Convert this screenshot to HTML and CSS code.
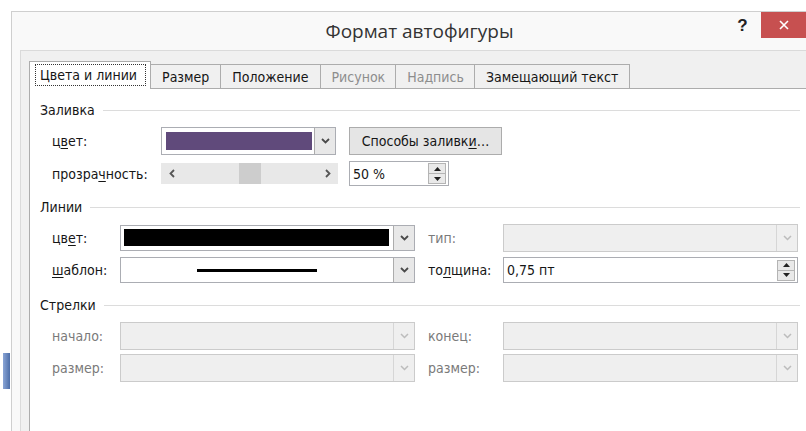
FILE: index.html
```html
<!DOCTYPE html>
<html lang="ru">
<head>
<meta charset="utf-8">
<title>Формат автофигуры</title>
<link rel="stylesheet" href="styles.css">
</head>
<body>
<div class="backdrop">
  <div class="sel-mark"></div>
</div>
<div class="window">
  <div class="titlebar">
    <div class="title">Формат автофигуры</div>
    <div class="help">?</div>
    <div class="close">
      <svg width="10" height="10" viewBox="0 0 10 10"><path d="M1 1 L9 9 M9 1 L1 9" stroke="#fff" stroke-width="1.6" fill="none"/></svg>
    </div>
  </div>
  <div class="frame">
    <div class="client">
      <div class="tabs">
        <div class="tab active"><span class="focus">Цвета и линии</span></div>
        <div class="tab">Размер</div>
        <div class="tab">Положение</div>
        <div class="tab disabled">Рисунок</div>
        <div class="tab disabled">Надпись</div>
        <div class="tab">Замещающий текст</div>
      </div>
      <div class="panel">
        <section class="group">
          <div class="group-head"><span>Заливка</span><i class="rule"></i></div>
          <div class="row row-first">
            <span class="lbl lbl-wide">ц<u>в</u>ет:</span>
            <div class="combo combo-fill">
              <div class="field"><div class="swatch swatch-purple"></div></div>
              <div class="drop"><svg width="9" height="6" viewBox="0 0 9 6"><path d="M1 1 L4.5 4.5 L8 1" stroke="#4a4a4a" stroke-width="1.8" fill="none"/></svg></div>
            </div>
            <div class="btn">Способы заливк<u>и</u>…</div>
          </div>
          <div class="row row-short">
            <span class="lbl lbl-wide">прозра<u>ч</u>ность:</span>
            <div class="scroll">
              <div class="sb-arrow"><svg width="6" height="9" viewBox="0 0 6 9"><path d="M5 1 L1.5 4.5 L5 8" stroke="#555" stroke-width="1.8" fill="none"/></svg></div>
              <div class="sb-track"><div class="sb-thumb"></div></div>
              <div class="sb-arrow"><svg width="6" height="9" viewBox="0 0 6 9"><path d="M1 1 L4.5 4.5 L1 8" stroke="#555" stroke-width="1.8" fill="none"/></svg></div>
            </div>
            <div class="spin spin-small">
              <span class="spin-text">50 %</span>
              <div class="spin-btns">
                <div class="spin-half spin-up"><svg width="7" height="4" viewBox="0 0 7 4"><path d="M0 4 L3.5 0 L7 4 Z" fill="#222"/></svg></div>
                <div class="spin-half"><svg width="7" height="4" viewBox="0 0 7 4"><path d="M0 0 L3.5 4 L7 0 Z" fill="#222"/></svg></div>
              </div>
            </div>
          </div>
        </section>

        <section class="group">
          <div class="group-head"><span>Линии</span><i class="rule"></i></div>
          <div class="row row-first">
            <span class="lbl">цв<u>е</u>т:</span>
            <div class="combo combo-wide combo-thin">
              <div class="field field-color"><div class="swatch swatch-black"></div></div>
              <div class="drop"><svg width="9" height="6" viewBox="0 0 9 6"><path d="M1 1 L4.5 4.5 L8 1" stroke="#4a4a4a" stroke-width="1.8" fill="none"/></svg></div>
            </div>
            <span class="lbl lbl2 off">тип:</span>
            <div class="combo combo-wide off">
              <div class="field"></div>
              <div class="drop"><svg width="9" height="6" viewBox="0 0 9 6"><path d="M1 1 L4.5 4.5 L8 1" stroke="#bcbcbc" stroke-width="1.5" fill="none"/></svg></div>
            </div>
          </div>
          <div class="row">
            <span class="lbl"><u>ш</u>аблон:</span>
            <div class="combo combo-wide combo-thin">
              <div class="field field-line"><div class="line-sample"></div></div>
              <div class="drop"><svg width="9" height="6" viewBox="0 0 9 6"><path d="M1 1 L4.5 4.5 L8 1" stroke="#4a4a4a" stroke-width="1.8" fill="none"/></svg></div>
            </div>
            <span class="lbl lbl2">то<u>л</u>щина:</span>
            <div class="spin spin-wide">
              <span class="spin-text">0,75 пт</span>
              <div class="spin-btns">
                <div class="spin-half spin-up"><svg width="7" height="4" viewBox="0 0 7 4"><path d="M0 4 L3.5 0 L7 4 Z" fill="#222"/></svg></div>
                <div class="spin-half"><svg width="7" height="4" viewBox="0 0 7 4"><path d="M0 0 L3.5 4 L7 0 Z" fill="#222"/></svg></div>
              </div>
            </div>
          </div>
        </section>

        <section class="group">
          <div class="group-head"><span>Стрелки</span><i class="rule"></i></div>
          <div class="row row-first">
            <span class="lbl off">начало:</span>
            <div class="combo combo-wide off">
              <div class="field"></div>
              <div class="drop"><svg width="9" height="6" viewBox="0 0 9 6"><path d="M1 1 L4.5 4.5 L8 1" stroke="#bcbcbc" stroke-width="1.5" fill="none"/></svg></div>
            </div>
            <span class="lbl lbl2 off">конец:</span>
            <div class="combo combo-wide off">
              <div class="field"></div>
              <div class="drop"><svg width="9" height="6" viewBox="0 0 9 6"><path d="M1 1 L4.5 4.5 L8 1" stroke="#bcbcbc" stroke-width="1.5" fill="none"/></svg></div>
            </div>
          </div>
          <div class="row">
            <span class="lbl off">размер:</span>
            <div class="combo combo-wide off">
              <div class="field"></div>
              <div class="drop"><svg width="9" height="6" viewBox="0 0 9 6"><path d="M1 1 L4.5 4.5 L8 1" stroke="#bcbcbc" stroke-width="1.5" fill="none"/></svg></div>
            </div>
            <span class="lbl lbl2 off">размер:</span>
            <div class="combo combo-wide off">
              <div class="field"></div>
              <div class="drop"><svg width="9" height="6" viewBox="0 0 9 6"><path d="M1 1 L4.5 4.5 L8 1" stroke="#bcbcbc" stroke-width="1.5" fill="none"/></svg></div>
            </div>
          </div>
        </section>
      </div>
    </div>
  </div>
</div>
</body>
</html>
```

FILE: styles.css
```css
* { box-sizing: border-box; }

html, body { margin: 0; }

body {
  width: 806px;
  height: 431px;
  overflow: hidden;
  background: #fff;
  display: flex;
  font-family: "DejaVu Sans", sans-serif;
  font-stretch: condensed;
  font-size: 14px;
  color: #161616;
}

u { text-decoration-thickness: 1px; text-underline-offset: 2px; }

/* strip of the document behind the dialog */
.backdrop { width: 11px; flex: none; padding-top: 353px; }
.sel-mark {
  width: 7px;
  height: 36px;
  margin-left: 3px;
  background: linear-gradient(90deg, #8aa5d6, #4d6ea8);
}

.window {
  flex: 1;
  min-width: 0;
  margin-top: 11px;
  border-left: 1px solid #cfcfcf;
  border-top: 1px solid #cfcfcf;
  background: #f9f9f9;
  display: flex;
  flex-direction: column;
}

/* title bar */
.titlebar { height: 38px; flex: none; display: flex; align-items: flex-start; }
.title {
  flex: 1;
  padding-left: 94px;
  text-align: center;
  font-family: "Open Sans", sans-serif;
  font-stretch: normal;
  font-size: 19px;
  line-height: 38px;
  color: #333;
}
.help {
  width: 28px;
  padding-right: 9px;
  text-align: center;
  font-family: "Liberation Sans", sans-serif;
  font-stretch: normal;
  font-weight: bold;
  font-size: 17px;
  line-height: 28px;
  color: #222;
}
.close {
  width: 45px;
  height: 26px;
  background: #c75050;
  display: flex;
  align-items: center;
  justify-content: center;
}

/* client area */
.frame { flex: 1; min-height: 0; padding-left: 8px; display: flex; }
.client {
  flex: 1;
  min-width: 0;
  border-top: 1px solid #dadada;
  border-left: 1px solid #dadada;
  background: #f0f0f0;
  padding: 10px 0 0 8px;
  display: flex;
  flex-direction: column;
}

/* tab strip */
.tabs {
  display: flex;
  align-items: flex-end;
  height: 28px;
  margin-bottom: -1px;
  position: relative;
  z-index: 1;
}
.tab {
  height: 24px;
  margin-bottom: 1px;
  padding: 1px 11px 0;
  border: 1px solid #acacac;
  border-left: none;
  border-bottom: none;
  background: #f0f0f0;
  display: flex;
  align-items: center;
  white-space: nowrap;
  color: #161616;
}
.tab.disabled { color: #8d8d8d; padding: 1px 10px 0 11px; }
.tab.active {
  height: 28px;
  margin-bottom: 0;
  padding: 2px 4px 3px 5px;
  border-left: 1px solid #acacac;
  background: #fff;
  align-items: stretch;
}
.focus {
  border: 1px dotted #333;
  padding: 0 8px 0 4px;
  display: flex;
  align-items: center;
}

/* tab page */
.panel {
  flex: 1;
  background: #fff;
  border-top: 1px solid #acacac;
  border-left: 1px solid #acacac;
  padding: 0 6px 0 10px;
}

.group-head {
  margin-top: 12px;
  height: 18px;
  display: flex;
  align-items: center;
}
.rule { flex: 1; height: 1px; background: #dcdcdc; margin-left: 8px; }

.row {
  display: flex;
  align-items: center;
  padding-left: 12px;
  height: 28px;
  margin-top: 4px;
}
.row-first { margin-top: 8px; }
.row-short { height: 25px; margin-top: 6px; }

.lbl { width: 68px; flex: none; white-space: nowrap; }
.lbl-wide { width: 109px; }
.lbl2 { width: 75px; margin-left: 13px; }
.off { color: #7a7a7a; }

/* drop-down boxes */
.combo {
  height: 28px;
  flex: none;
  border: 1px solid #abadb3;
  background: #fff;
  display: flex;
}
.combo-fill { width: 175px; }
.combo-wide { width: 295px; }
.combo-thin { height: 26px; }
.field { flex: 1; padding: 4px 2px 4px 4px; display: flex; align-items: stretch; }
.field-color { padding: 3px 4px 4px 3px; }
.field-line { align-items: center; justify-content: center; padding: 0; }
.swatch { flex: 1; }
.swatch-purple { background: #604a7b; }
.swatch-black { background: #000; }
.line-sample { width: 120px; height: 3px; background: #000; }
.drop {
  width: 21px;
  flex: none;
  border-left: 1px solid #acacac;
  background: #e8e8e8;
  display: flex;
  align-items: center;
  justify-content: center;
}
.combo.off { border-color: #cbcbcb; background: #efefef; }
.combo.off .drop { border-left-color: #d6d6d6; background: #efefef; }

/* push button */
.btn {
  width: 153px;
  height: 28px;
  margin-left: 13px;
  border: 1px solid #acacac;
  background: #e5e5e5;
  display: flex;
  align-items: center;
  justify-content: center;
  white-space: nowrap;
}

/* horizontal scroll bar */
.scroll {
  width: 177px;
  height: 21px;
  flex: none;
  background: #e8e8e8;
  display: flex;
}
.sb-arrow { width: 21px; display: flex; align-items: center; justify-content: center; }
.sb-track { flex: 1; display: flex; justify-content: center; }
.sb-thumb { width: 22px; background: #cdcdcd; }

/* spin boxes */
.spin {
  flex: none;
  border: 1px solid #abadb3;
  background: #fff;
  display: flex;
  align-items: center;
}
.spin-small { width: 100px; height: 25px; margin-left: 11px; }
.spin-wide { width: 295px; height: 26px; }
.spin-text { flex: 1; padding-left: 3px; white-space: nowrap; }
.spin-btns {
  width: 18px;
  height: 21px;
  margin-right: 2px;
  border: 1px solid #b4b4b4;
  background: #e9e9e9;
  display: flex;
  flex-direction: column;
}
.spin-half { flex: 1; display: flex; align-items: center; justify-content: center; }
.spin-up { border-bottom: 1px solid #b4b4b4; }
```
